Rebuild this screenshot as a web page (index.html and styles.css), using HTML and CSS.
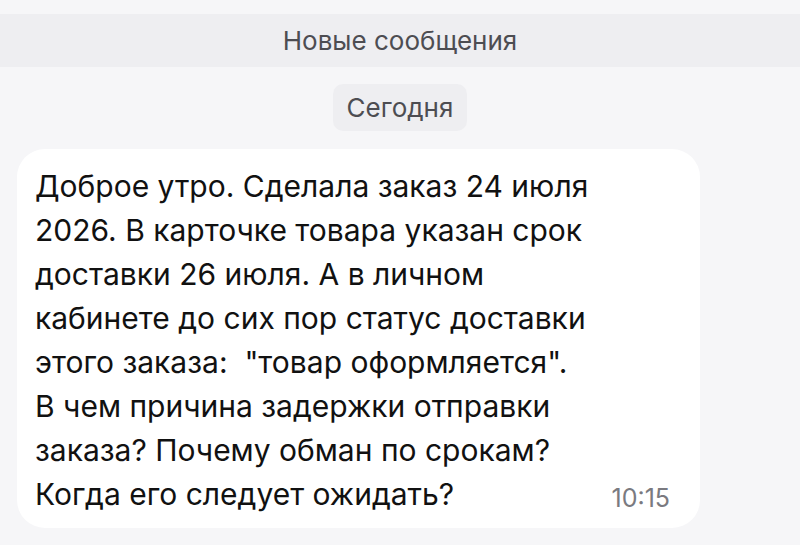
FILE: index.html
```html
<!DOCTYPE html>
<html lang="ru">
<head>
    <meta charset="UTF-8">
    <meta name="viewport" content="width=device-width, initial-scale=1.0">
    <title>Чат</title>
    <link rel="stylesheet" href="styles.css">
</head>
<body>
    <section class="chat">
        <div class="new-bar">Новые сообщения</div>
        <div class="day">
            <span class="day-pill">Сегодня</span>
        </div>
        <div class="message">
            <p class="message-text">Доброе утро. Сделала заказ 24 июля<br>2026. В карточке товара указан срок<br>доставки 26 июля. А в личном<br>кабинете до сих пор статус доставки<br>этого заказа:&nbsp; "товар оформляется".<br>В чем причина задержки отправки<br>заказа? Почему обман по срокам?<br>Когда его следует ожидать?</p>
            <span class="message-time">10:15</span>
        </div>
    </section>
</body>
</html>
```
FILE: styles.css
```css
*{
    margin: 0;
    padding: 0;
    box-sizing: border-box;
}
body{
    background-color: #f6f6f8;
    font-family: Inter, "Noto Sans", sans-serif;
    color: #111;
}
.chat{
    height: 545px;
    padding-top: 14px;
    overflow: hidden;
}
.new-bar{
    background-color: #eeeef1;
    height: 53px;
    display: flex;
    justify-content: center;
    align-items: center;
    font-size: 26px;
    color: #4d4d52;
}
.day{
    display: flex;
    justify-content: center;
    padding-top: 17px;
}
.day-pill{
    background-color: #eeeef1;
    border-radius: 10px;
    width: 134px;
    height: 47px;
    display: flex;
    justify-content: center;
    align-items: center;
    font-size: 26px;
    color: #4d4d52;
}
.message{
    margin: 18px 100px 0 17px;
    background-color: #fff;
    border-radius: 28px;
    padding: 15px 30px 12px 18px;
    display: flex;
    align-items: flex-end;
    justify-content: space-between;
}
.message-text{
    font-size: 30px;
    line-height: 44px;
}
.message-time{
    font-size: 25px;
    color: #7a7a80;
    padding-bottom: 3px;
}
```
